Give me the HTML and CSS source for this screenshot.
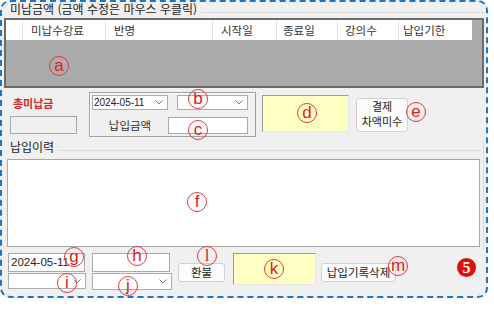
FILE: index.html
```html
<!DOCTYPE html>
<html lang="ko">
<head>
    <meta charset="UTF-8">
    <title>납입 관리</title>
    <link rel="stylesheet" href="styles.css">
</head>
<body>
    <div class="frame">
        <!-- 미납금액 -->
        <div class="group_title">미납금액 (금액 수정은 마우스 우클릭)</div>
        <div class="grid">
            <div class="grid_head">
                <div class="col c0"></div>
                <div class="col c1">미납수강료</div>
                <div class="col c2">반명</div>
                <div class="col c3">시작일</div>
                <div class="col c4">종료일</div>
                <div class="col c5">강의수</div>
                <div class="col c6">납입기한</div>
            </div>
        </div>

        <!-- 납입 입력 -->
        <div class="pay_row">
            <div class="owed">
                <div class="owed_label">총미납금</div>
                <div class="owed_box"></div>
            </div>
            <div class="pay_panel">
                <div class="panel_row">
                    <div class="combo combo_date">2024-05-11 <svg width="8" height="5" viewBox="0 0 8 5"><polyline points="0.5,0.5 4,4 7.5,0.5" fill="none" stroke="#777" stroke-width="1"/></svg></div>
                    <div class="combo combo_b"><svg width="8" height="5" viewBox="0 0 8 5"><polyline points="0.5,0.5 4,4 7.5,0.5" fill="none" stroke="#777" stroke-width="1"/></svg></div>
                </div>
                <div class="panel_row second">
                    <div class="amount_label">납입금액</div>
                    <div class="textbox amount_box"></div>
                </div>
            </div>
            <div class="sum_box sum_d"></div>
            <button class="btn btn_diff">결제<br>차액미수</button>
        </div>

        <!-- 납입이력 -->
        <div class="history">
            <div class="group_title">납입이력</div>
            <div class="history_box"></div>
        </div>

        <div class="bottom_row">
            <div class="stack">
                <div class="textbox date_box">2024-05-11</div>
                <div class="combo combo_i"><svg width="8" height="5" viewBox="0 0 8 5"><polyline points="0.5,0.5 4,4 7.5,0.5" fill="none" stroke="#777" stroke-width="1"/></svg></div>
            </div>
            <div class="stack second_stack">
                <div class="textbox box_h"></div>
                <div class="combo combo_j"><svg width="8" height="5" viewBox="0 0 8 5"><polyline points="0.5,0.5 4,4 7.5,0.5" fill="none" stroke="#777" stroke-width="1"/></svg></div>
            </div>
            <button class="btn btn_refund">환불</button>
            <div class="sum_box sum_k"></div>
            <button class="btn btn_delete">납입기록삭제</button>
        </div>

        <!-- 주석 표시 -->
        <span class="mark m_a">a</span>
        <span class="mark m_b">b</span>
        <span class="mark m_c">c</span>
        <span class="mark m_d">d</span>
        <span class="mark m_e">e</span>
        <span class="mark m_f">f</span>
        <span class="mark m_g">g</span>
        <span class="mark m_h">h</span>
        <span class="mark m_l">l</span>
        <span class="mark m_i">i</span>
        <span class="mark m_j">j</span>
        <span class="mark m_k">k</span>
        <span class="mark m_m">m</span>
        <span class="section_no">5</span>
    </div>
</body>
</html>
```

FILE: styles.css
```css
* {
    margin: 0;
    padding: 0;
    box-sizing: border-box;
}

body {
    background: #fff;
    font-family: "Noto Sans CJK KR", sans-serif;
    font-size: 12px;
    color: #222;
}

/* Outer dashed frame */
.frame {
    position: relative;
    width: 488px;
    height: 298px;
    border: 2px dashed #1c75c6;
    border-radius: 10px;
    background: #f0f0f0;
}

/* Group titles with etched line */
.group_title {
    display: flex;
    align-items: center;
    height: 14px;
    line-height: 14px;
    padding-left: 8px;
    white-space: nowrap;
}

.group_title::after {
    content: "";
    flex: 1;
    margin: 6px 2px 0 4px;
    border-top: 1px solid #dcdcdc;
}

/* Grid */
.grid {
    margin: 2px 0 0 2px;
    width: 480px;
    height: 70px;
    border: 2px solid #6b6b6b;
    background: #ababab;
}

.grid_head {
    display: flex;
    width: 466px;
    height: 20px;
    background: #fff;
}

.col {
    height: 20px;
    line-height: 20px;
    padding-left: 8px;
    border-right: 1px solid #e3e3e3;
    font-size: 11.5px;
    color: #333;
}

.c0 { width: 17px; }
.c1 { width: 83px; }
.c2 { width: 107px; }
.c3 { width: 64px; }
.c4 { width: 61px; padding-left: 6px; }
.c5 { width: 61px; padding-left: 7px; }
.c6 { width: 73px; padding-left: 4px; border-right: none; }

/* Payment row */
.pay_row {
    display: flex;
    align-items: flex-start;
    margin-top: 4px;
}

.owed {
    margin-left: 8px;
    width: 67px;
}

.owed_label {
    padding: 4px 0 0 3px;
    line-height: 14px;
    font-size: 11px;
    font-weight: bold;
    color: #d12b2b;
}

.owed_box {
    margin-top: 6px;
    height: 18px;
    border: 1px solid #a8a8a8;
    background: #f0f0f0;
}

.pay_panel {
    margin-left: 12px;
    width: 167px;
    height: 45px;
    padding: 2px 0 0 2px;
    border: 1px solid #a0a0a0;
    box-shadow: inset 1px 1px 0 #fff;
}

.panel_row {
    display: flex;
    align-items: center;
}

.panel_row.second {
    margin-top: 7px;
}

.combo {
    display: flex;
    align-items: center;
    justify-content: flex-end;
    gap: 6px;
    height: 15px;
    padding: 0 4px 0 1px;
    background: #fff;
    border: 1px solid #adadad;
    font-family: "Liberation Sans", Arial, sans-serif;
    font-size: 10px;
}

.combo_date {
    width: 76px;
    justify-content: space-between;
}

.combo_b {
    margin-left: 9px;
    width: 71px;
}

.amount_label {
    width: 76px;
    line-height: 17px;
    text-align: center;
    font-size: 11.5px;
    color: #333;
}

.textbox {
    background: #fff;
    border: 1px solid #a9a9a9;
}

.amount_box {
    width: 80px;
    height: 17px;
}

.sum_box {
    background: #ffffc4;
    border: 1px solid;
    border-color: #9c9c9c #e6e6e6 #e6e6e6 #9c9c9c;
}

.sum_d {
    margin: 3px 0 0 6px;
    width: 87px;
    height: 37px;
}

.btn {
    background: #fcfcfc;
    border: 1px solid #d0d0d0;
    border-radius: 3px;
    font-family: "Noto Sans CJK KR", sans-serif;
    font-size: 11.5px;
    line-height: 13px;
    color: #222;
}

.btn_diff {
    margin: 6px 0 0 7px;
    width: 52px;
    height: 34px;
    padding-bottom: 2px;
    font-size: 11px;
    line-height: 15px;
    text-align: center;
}

/* History */
.history {
    margin-top: 3px;
    width: 482px;
    padding-bottom: 3px;
    border-right: 1px solid #dcdcdc;
}

.history_box {
    margin: 5px 0 0 5px;
    width: 473px;
    height: 88px;
    background: #fff;
    border: 1px solid #a8a8a8;
}

/* Bottom row */
.bottom_row {
    display: flex;
    align-items: flex-start;
    margin-top: 3px;
    padding-left: 6px;
}

.stack {
    display: flex;
    flex-direction: column;
    gap: 1px;
}

.date_box {
    width: 77px;
    height: 19px;
    padding-left: 2px;
    line-height: 17px;
    font-family: "Liberation Sans", Arial, sans-serif;
    font-size: 11.5px;
}

.combo_i {
    width: 78px;
    height: 16px;
}

.second_stack {
    margin-left: 6px;
}

.box_h {
    width: 78px;
    height: 19px;
}

.combo_j {
    width: 80px;
    height: 17px;
}

.btn_refund {
    margin: 10px 0 0 6px;
    width: 47px;
    height: 19px;
}

.sum_k {
    margin-left: 8px;
    width: 83px;
    height: 32px;
}

.btn_delete {
    margin: 10px 0 0 5px;
    width: 75px;
    height: 19px;
}

/* Annotation marks */
.mark {
    position: absolute;
    width: 20px;
    height: 20px;
    border: 1px solid #e23a3a;
    border-radius: 50%;
    text-align: center;
    line-height: 17px;
    font-family: "Liberation Sans", Arial, sans-serif;
    font-size: 17px;
    color: #e01b1b;
}

.m_a { left: 47px; top: 54px; }
.m_b { left: 186px; top: 87px; }
.m_c { left: 186px; top: 118px; }
.m_d { left: 295px; top: 101px; }
.m_e { left: 404px; top: 100px; }
.m_f { left: 185px; top: 190px; }
.m_g { left: 62px; top: 245px; }
.m_h { left: 125px; top: 244px; }
.m_l { left: 195px; top: 244px; font-family: "Liberation Serif", serif; }
.m_i { left: 55px; top: 271px; }
.m_j { left: 116px; top: 274px; }
.m_k { left: 262px; top: 257px; }
.m_m { left: 386px; top: 254px; }

.section_no {
    position: absolute;
    left: 455px;
    top: 256px;
    width: 19px;
    height: 19px;
    border-radius: 50%;
    background: #e00d0d;
    color: #fff;
    text-align: center;
    line-height: 19px;
    font-family: "Liberation Serif", serif;
    font-weight: bold;
    font-size: 16px;
}
```
